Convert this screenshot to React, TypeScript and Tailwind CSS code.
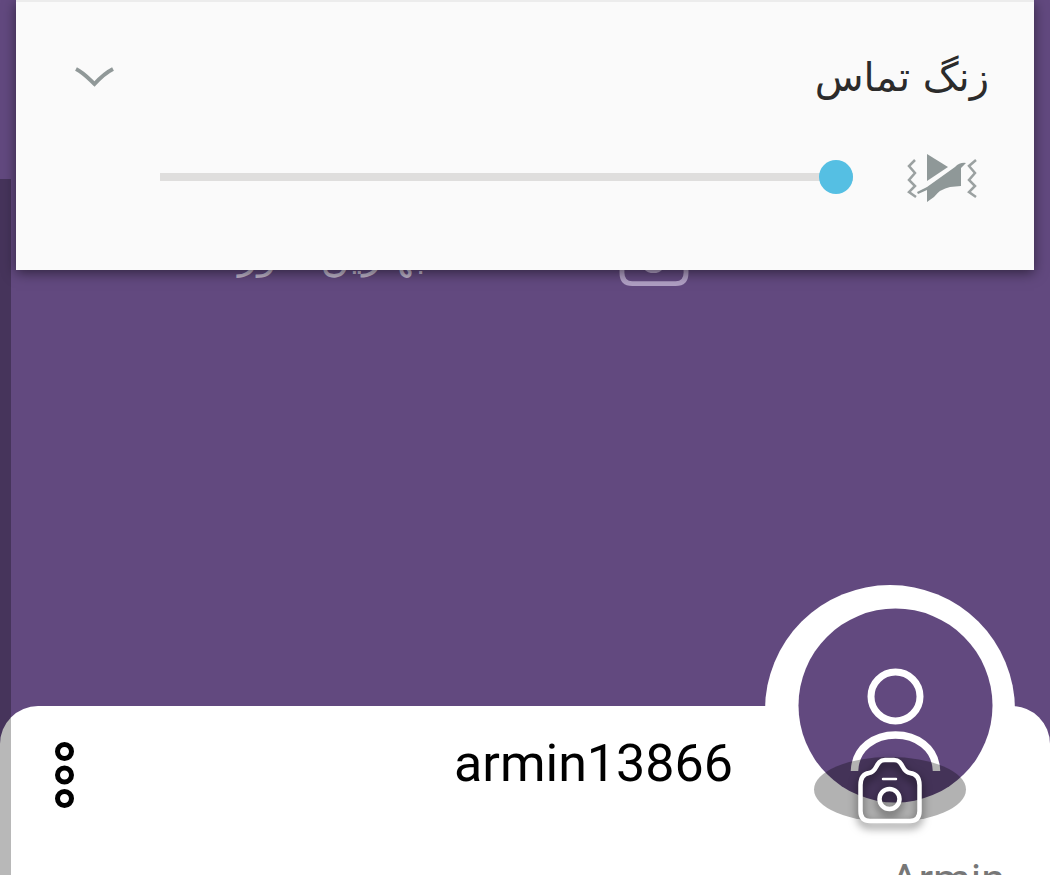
import React, { useState } from "react";

export default function ProfilePage() {
  const [volume, setVolume] = useState(100);

  return (
    <div className="relative h-screen overflow-hidden bg-[#62497f] font-['Roboto',sans-serif]">
      {/* Cover */}
      <header className="flex h-[706px] items-start pt-[212px] pl-[238px]">
        <p dir="rtl" className="w-[334px] font-['DejaVu_Sans',sans-serif] text-[40px] leading-[84px] text-white/60">
          <span className="block text-left whitespace-nowrap">بهترین کاور</span>
        </p>
        <button aria-label="Change cover" className="ml-11 text-[#b09fc4]">
          <CameraIcon className="h-[76px] w-[76px]" />
        </button>
      </header>

      {/* Profile sheet */}
      <main className="min-h-[169px] rounded-t-[38px] bg-white">
        <div className="flex items-start pr-[35px] pl-[55px]">
          <button aria-label="More options" className="mt-9">
            <svg width="20" height="66" viewBox="0 0 20 66" fill="none" stroke="#000" strokeWidth="5">
              <circle cx="9.5" cy="9.5" r="7" />
              <circle cx="9.5" cy="33" r="7" />
              <circle cx="9.5" cy="56.5" r="7" />
            </svg>
          </button>
          <h1 className="mt-7 mr-8 ml-auto text-[52px] leading-[60px] text-black">armin13866</h1>
          <Avatar />
        </div>
        <p className="mt-[18px] pr-[45px] text-right text-[43px] leading-[52px] text-[#777777]">Armin</p>
      </main>

      <div className="absolute top-[179px] bottom-0 left-0 w-[11px] bg-black/28" />

      {/* Volume panel */}
      <section className="absolute inset-x-4 top-0 flex flex-col gap-5 border-t-2 border-[#ececec] bg-[#fafafa] pt-[35px] pb-[53px] shadow-[0_3px_12px_rgba(0,0,0,0.5)]">
        <div className="flex h-20 items-center justify-between pr-[45px] pl-[59px]">
          <button aria-label="Expand">
            <svg width="40" height="24" viewBox="0 0 40 24" fill="none" stroke="#909898" strokeWidth="4">
              <path d="M1 4 C9 8 14 14 19.500 19 C25 13 30 8 38 4" />
            </svg>
          </button>
          <label
            htmlFor="ring-volume"
            dir="rtl"
            className="font-['DejaVu_Sans',sans-serif] text-[40px] leading-[56px] text-[#2b2b2b]"
          >
            زنگ تماس
          </label>
        </div>
        <div className="flex h-20 items-center pr-[55px] pl-36">
          <input
            id="ring-volume"
            type="range"
            min={0}
            max={100}
            value={volume}
            onChange={(e) => setVolume(Number(e.target.value))}
            className="h-9 min-w-0 flex-1 appearance-none bg-transparent outline-none [&::-webkit-slider-runnable-track]:h-2 [&::-webkit-slider-runnable-track]:bg-[#dfdedd] [&::-webkit-slider-thumb]:-mt-[13px] [&::-webkit-slider-thumb]:size-[34px] [&::-webkit-slider-thumb]:appearance-none [&::-webkit-slider-thumb]:rounded-full [&::-webkit-slider-thumb]:bg-[#55bfe3]"
          />
          <VibrateIcon />
        </div>
      </section>
    </div>
  );
}

function Avatar() {
  return (
    <div className="relative -mt-[121px] size-[250px] shrink-0 rounded-full bg-white">
      <svg width="250" height="250" viewBox="0 0 250 250" fill="none">
        <circle cx="130.500" cy="120.500" r="97" fill="#62497f" />
        <circle cx="130.500" cy="111.500" r="24.500" stroke="#fff" strokeWidth="7" />
        <path d="M89.500 186 C91 138 170 138 171.500 186" stroke="#fff" strokeWidth="7.500" />
      </svg>
      <button
        aria-label="Change photo"
        className="absolute top-[172px] left-[49px] flex h-[65px] w-[152px] items-center justify-center rounded-[50%] bg-black/30 text-white"
      >
        <CameraIcon className="h-[70px] w-[66px] shrink-0 drop-shadow-[0_4px_5px_rgba(0,0,0,0.6)]" />
      </button>
    </div>
  );
}

function CameraIcon({ className }: { className: string }) {
  return (
    <svg className={className} viewBox="0 0 66 70" fill="none" stroke="currentColor" strokeWidth="4.500" strokeLinecap="round">
      <path d="M12 18 C21 17 18 5 28 5 H37 C47 5 44 17 53 18 C60 19 62.500 23 62.500 30 V56 Q62.500 66 53 66 H13 Q3.500 66 3.500 56 V30 C3.500 23 6 19 12 18 Z" />
      <circle cx="32.500" cy="44" r="10" />
      <path d="M26 24 H39" strokeWidth="2.500" />
    </svg>
  );
}

function VibrateIcon() {
  return (
    <svg className="ml-[52px] shrink-0" width="74" height="54" viewBox="905 150 74 54" fill="none">
      <path d="M915 160 L909 166 L915 173 L909 180 L915 186 L909 192 L916 197" stroke="#9ba1a1" strokeWidth="2.500" />
      <path d="M976 160 L969 166 L975 173 L969 180 L975 186 L969 192 L976 197" stroke="#9ba1a1" strokeWidth="2.500" />
      <path d="M927 154 L948 167 L927 181 Z" fill="#8f9898" />
      <path d="M917 192 L927 187 L955 167 Q960 162 966 163 L961 168 V186 L950 187 Q940 189 934 197 L927 202 V190 L918 194 Z" fill="#8f9898" />
    </svg>
  );
}
